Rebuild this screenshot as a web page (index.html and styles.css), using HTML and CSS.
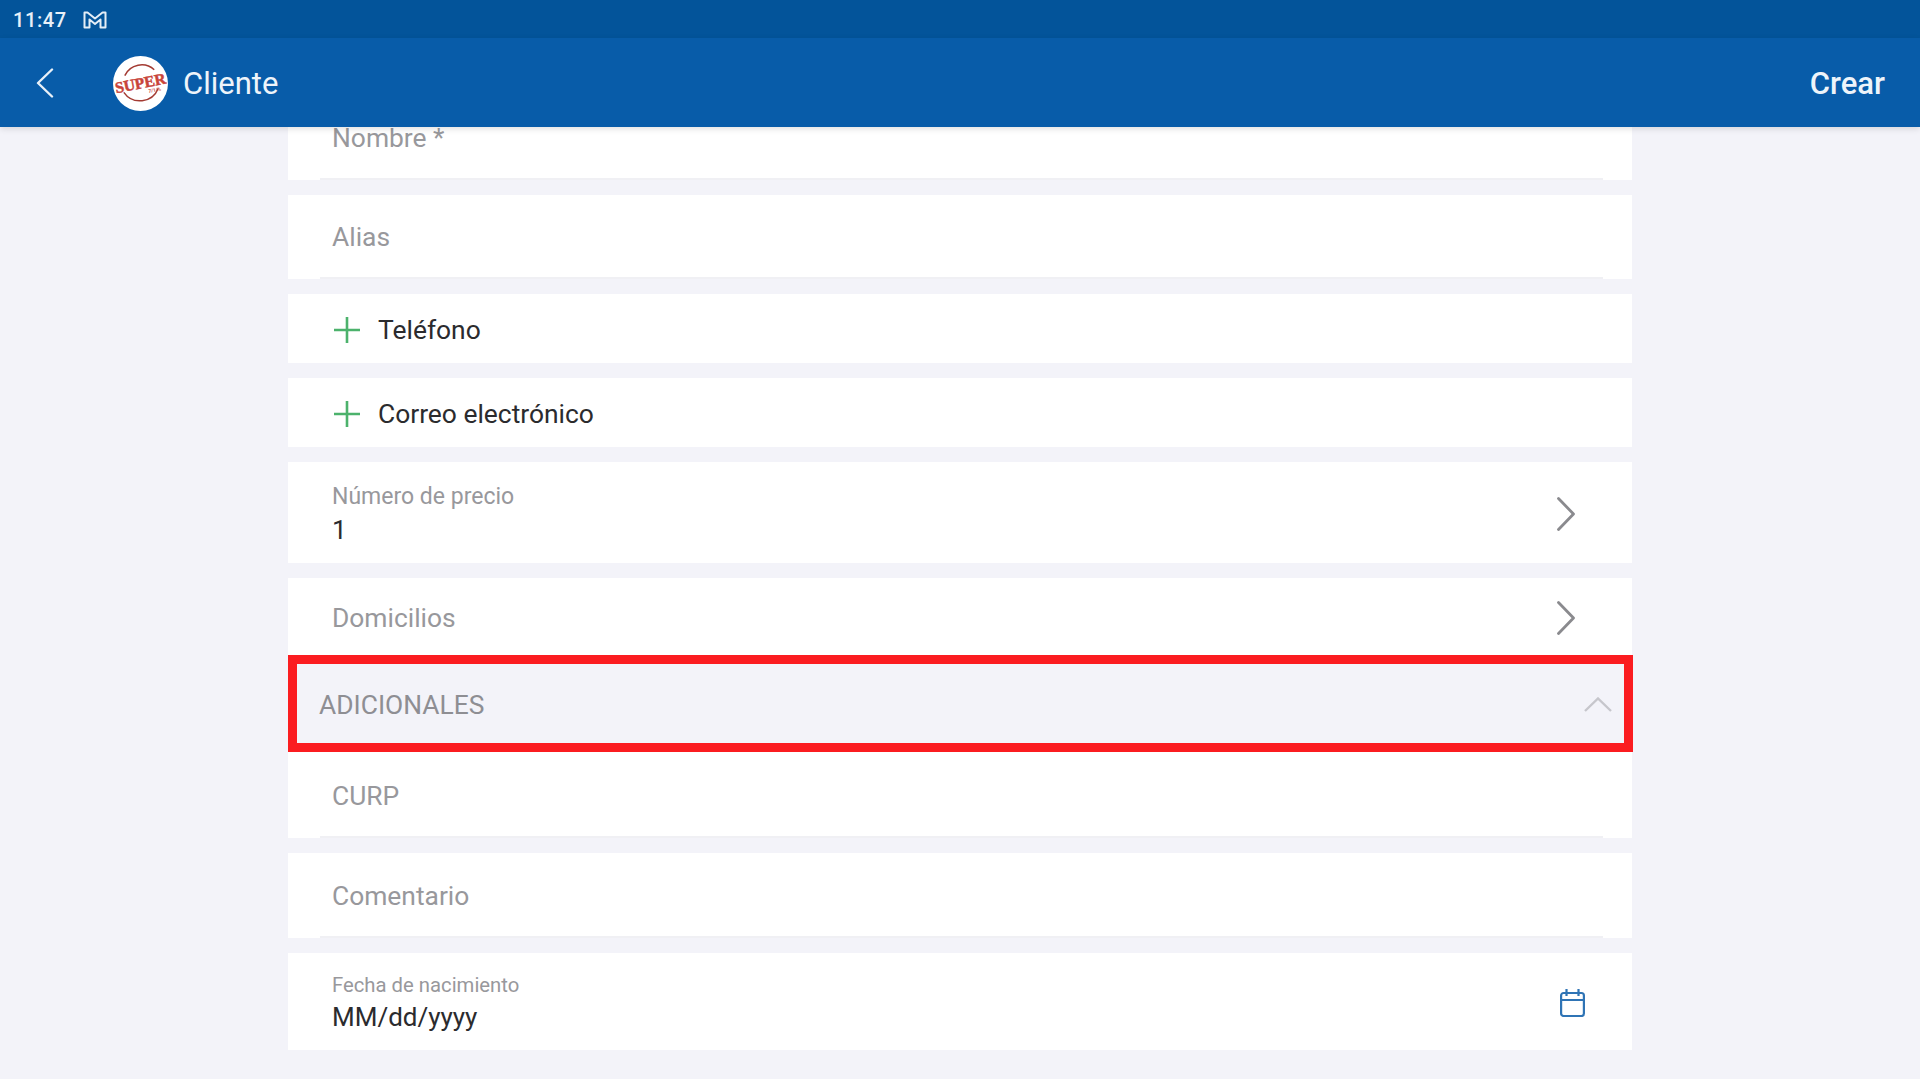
FILE: index.html
```html
<!DOCTYPE html>
<html lang="es">
<head>
  <meta charset="UTF-8">
  <meta name="viewport" content="width=device-width, initial-scale=1.0">
  <title>Cliente</title>
  <link rel="stylesheet" href="styles.css">
</head>
<body>

  <div class="status-bar">
    <span class="hora">11:47</span>
    <svg class="icono-gmail" viewBox="0 0 24 18" fill="none" stroke="#e4edf6" stroke-width="2" stroke-linejoin="round">
      <path d="M1.500 1.500h3L12 7.500l7.500-6h3v15h-5V8.500L12 13 6.500 8.500V16.500h-5z"/>
    </svg>
  </div>

  <header>
    <svg class="atras" viewBox="0 0 18 30" fill="none" stroke="#e8f0f8" stroke-width="2.400" stroke-linecap="round" stroke-linejoin="round">
      <path d="M16 1.500 2 15l14 13.500"/>
    </svg>
    <svg class="logo" viewBox="0 0 56 56">
      <circle cx="28" cy="28" r="28" fill="#fff"/>
      <path d="M12 20A19 19 0 0 1 42 14" fill="none" stroke="#a33a32" stroke-width="1.500"/>
      <path d="M11 37A20 20 0 0 0 46 33" fill="none" stroke="#a33a32" stroke-width="1.500"/>
      <g transform="rotate(-11 28 28)">
        <text class="logo-texto" x="28" y="33" text-anchor="middle">SUPER</text>
        <text class="logo-sub" x="41" y="39" text-anchor="middle">7/1/%</text>
      </g>
    </svg>
    <span class="titulo">Cliente</span>
    <span class="crear">Crear</span>
  </header>

  <main class="formulario">
    <div class="fila fila-nombre">
      <div class="campo con-linea"><span class="placeholder">Nombre *</span></div>
    </div>
    <div class="fila fila-alias">
      <div class="campo con-linea"><span class="placeholder">Alias</span></div>
    </div>
    <div class="fila fila-agregar">
      <svg class="mas" viewBox="0 0 26 26" fill="none" stroke="#4cb26c" stroke-width="2.600"><path d="M13 0v26M0 13h26"/></svg>
      <span class="texto">Teléfono</span>
    </div>
    <div class="fila fila-agregar">
      <svg class="mas" viewBox="0 0 26 26" fill="none" stroke="#4cb26c" stroke-width="2.600"><path d="M13 0v26M0 13h26"/></svg>
      <span class="texto">Correo electrónico</span>
    </div>
    <div class="fila fila-precio">
      <div class="doble">
        <span class="etiqueta">Número de precio</span>
        <span class="texto">1</span>
      </div>
      <svg class="flecha" viewBox="0 0 18 34" fill="none" stroke="#8a8a8e" stroke-width="2.800" stroke-linecap="round" stroke-linejoin="round"><path d="M1.500 1.500 16.500 17 1.500 32.500"/></svg>
    </div>
    <div class="fila fila-domicilios">
      <span class="placeholder">Domicilios</span>
      <svg class="flecha" viewBox="0 0 18 34" fill="none" stroke="#8a8a8e" stroke-width="2.800" stroke-linecap="round" stroke-linejoin="round"><path d="M1.500 1.500 16.500 17 1.500 32.500"/></svg>
    </div>

    <div class="seccion">
      <span class="seccion-titulo">ADICIONALES</span>
      <svg class="chevron-arriba" viewBox="0 0 28 15" fill="none" stroke="#c6c6cc" stroke-width="2.400"><path d="M1 14 14 1.500 27 14"/></svg>
    </div>

    <div class="fila fila-curp">
      <div class="campo con-linea"><span class="placeholder">CURP</span></div>
    </div>
    <div class="fila fila-comentario">
      <div class="campo con-linea"><span class="placeholder">Comentario</span></div>
    </div>
    <div class="fila fila-fecha">
      <div class="doble">
        <span class="etiqueta etiqueta-chica">Fecha de nacimiento</span>
        <span class="texto texto-fecha">MM/dd/yyyy</span>
      </div>
      <svg class="calendario" viewBox="0 0 25 28" fill="none" stroke="#2f74b5" stroke-width="2.200" stroke-linejoin="round"><rect x="1.100" y="4" width="22.800" height="23" rx="2.500"/><path d="M1 11h23M6.500 0v7M18.500 0v7"/></svg>
    </div>
  </main>

</body>
</html>
```

FILE: styles.css
```css
* {
  margin: 0;
  padding: 0;
  box-sizing: border-box;
  font-family: Roboto, "Liberation Sans", sans-serif;
}

html, body {
  height: 100%;
  overflow: hidden;
}

body {
  background-color: #f3f3f9;
  color: #2b2b2e;
  display: flex;
  flex-direction: column;
}

/* Barra de estado */
.status-bar {
  height: 38px;
  flex-shrink: 0;
  background: #03549a;
  display: flex;
  align-items: center;
  padding-left: 13px;
  padding-top: 2px;
  color: #e8f0f8;
}
.hora {
  font-size: 20px;
  font-weight: 500;
  letter-spacing: 0.6px;
}
.icono-gmail {
  width: 24px;
  height: 18px;
  margin-left: 16px;
}

/* Encabezado */
header {
  height: 89px;
  flex-shrink: 0;
  background: #085ca9;
  display: flex;
  align-items: center;
  padding-left: 36px;
  padding-top: 1px;
  color: #eef4fa;
  box-shadow: 0 2px 6px rgba(0, 0, 0, 0.12);
  position: relative;
}
.atras {
  width: 18px;
  height: 30px;
}
.logo {
  width: 55px;
  height: 55px;
  margin-left: 59px;
}
.logo-texto {
  font-family: "Liberation Serif", serif;
  font-size: 16px;
  font-weight: bold;
  fill: #c8443a;
  stroke: #c8443a;
  stroke-width: 0.5px;
}
.logo-sub {
  font-size: 5px;
  font-weight: bold;
  fill: #c8443a;
}
.titulo {
  font-size: 31px;
  margin-left: 15px;
}
.crear {
  font-size: 31px;
  font-weight: 500;
  margin-left: auto;
  margin-right: 35px;
}

/* Formulario */
.formulario {
  width: 1344px;
  margin-left: 288px;
  display: flex;
  flex-direction: column;
}

.fila {
  background: white;
  margin-bottom: 15px;
  padding-top: 2px;
  display: flex;
  align-items: center;
  font-size: 26.400px;
}

.placeholder {
  color: #98989c;
}
.texto {
  color: #2b2b2e;
}
.texto-fecha {
  font-size: 26px;
}

.campo {
  width: 1283px;
  height: 100%;
  margin-left: 32px;
  padding-left: 12px;
  display: flex;
  align-items: center;
}
.con-linea {
  border-bottom: 2px solid #f0f0f4;
}

.fila-nombre {
  height: 53px;
  padding-top: 0;
}
.fila-nombre .campo {
  align-items: flex-start;
  line-height: 22px;
}
.fila-alias {
  height: 84px;
}
.fila-agregar {
  height: 69px;
  padding-left: 46px;
}
.mas {
  width: 26px;
  height: 26px;
  margin-right: 18px;
}
.fila-precio {
  height: 101px;
  padding-left: 44px;
}
.fila-domicilios {
  height: 77px;
  padding-left: 44px;
  margin-bottom: 0;
}
.doble {
  display: flex;
  flex-direction: column;
  gap: 5px;
}
.etiqueta {
  font-size: 23px;
  color: #98989c;
}
.etiqueta-chica {
  font-size: 20.300px;
}
.flecha {
  width: 18px;
  height: 34px;
  margin-left: auto;
  margin-right: 57px;
}

/* Seccion marcada en rojo */
.seccion {
  height: 97px;
  width: 1345px;
  border: 9px solid #fb1c20;
  background: #f3f3f9;
  display: flex;
  align-items: center;
  padding-left: 22px;
  padding-right: 12px;
  padding-top: 2px;
}
.seccion-titulo {
  font-size: 26.400px;
  color: #8e8e93;
}
.chevron-arriba {
  width: 28px;
  height: 15px;
  margin-left: auto;
}

.fila-curp {
  height: 86px;
  padding-top: 3px;
}
.fila-comentario {
  height: 85px;
}
.fila-fecha {
  height: 97px;
  padding-left: 44px;
}
.calendario {
  width: 25px;
  height: 28px;
  margin-left: auto;
  margin-right: 47px;
}
```
